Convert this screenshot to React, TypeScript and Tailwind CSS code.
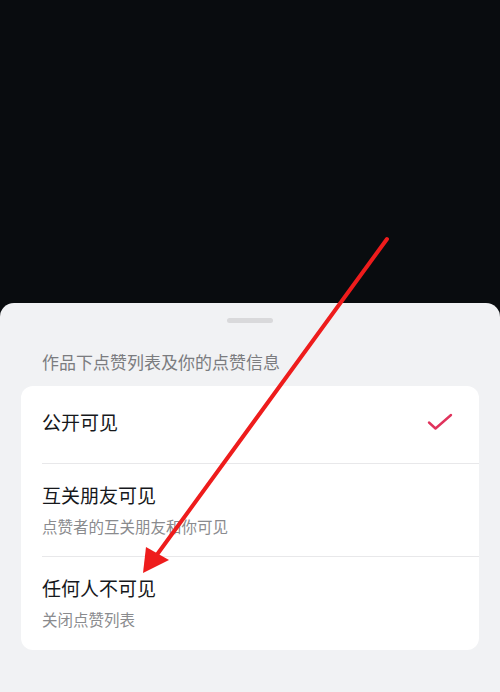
const OPTIONS = [
  { title: "公开可见", desc: null, checked: true },
  { title: "互关朋友可见", desc: "点赞者的互关朋友和你可见", checked: false },
  { title: "任何人不可见", desc: "关闭点赞列表", checked: false },
];

function Check() {
  return (
    <svg width="26" height="20" viewBox="0 0 26 20" fill="none">
      <path d="M2 10.5 L8.5 16.5 L24 3" stroke="#e0335c" strokeWidth="2.4" strokeLinecap="round" strokeLinejoin="round" />
    </svg>
  );
}

export default function App() {
  return (
    <div
      className="relative w-[500px] h-[692px] bg-[#090c0f] flex flex-col overflow-hidden"
      style={{ fontFamily: '"Noto Sans CJK SC", "Noto Sans", sans-serif' }}
    >
      <div className="h-[303px] shrink-0" />

      {/* bottom sheet */}
      <div className="flex-1 bg-[#f1f2f4] rounded-t-[14px] flex flex-col">
        <div className="flex justify-center pt-[15px]">
          <div className="w-[46px] h-[5px] rounded-full bg-[#d9d9db]" />
        </div>
        <p className="mt-[27px] px-[42px] text-[17px] leading-[24px] text-[#7b7c7f]">
          作品下点赞列表及你的点赞信息
        </p>
        <div className="mt-[12px] mx-[21px] bg-white rounded-[12px] overflow-hidden">
          {OPTIONS.map((opt, i) => (
            <div key={opt.title} className={i > 0 ? "ml-[21px] border-t border-[#e8e8ea]" : "ml-[21px]"}>
              {opt.desc ? (
                <div className={i === 2 ? "h-[93px] flex flex-col pt-[17px]" : "h-[92px] flex flex-col pt-[17px]"}>
                  <span className="text-[19px] leading-[28px] text-[#16181c]">{opt.title}</span>
                  <span className="mt-[6px] text-[15.5px] leading-[22px] text-[#8a8b8e]">{opt.desc}</span>
                </div>
              ) : (
                <div className="h-[77px] flex items-center justify-between pr-[26px] pb-[5px]">
                  <span className="text-[19px] leading-[28px] text-[#16181c]">{opt.title}</span>
                  {opt.checked && <Check />}
                </div>
              )}
            </div>
          ))}
        </div>
      </div>

      {/* red annotation arrow */}
      <svg className="absolute left-0 top-0 pointer-events-none" width="500" height="692" viewBox="0 0 500 692">
        <line x1="387" y1="239" x2="156" y2="556" stroke="#ee1c1c" strokeWidth="4" strokeLinecap="round" />
        <polygon points="143,573 146,547 169,560" fill="#ee1c1c" />
      </svg>
    </div>
  );
}
